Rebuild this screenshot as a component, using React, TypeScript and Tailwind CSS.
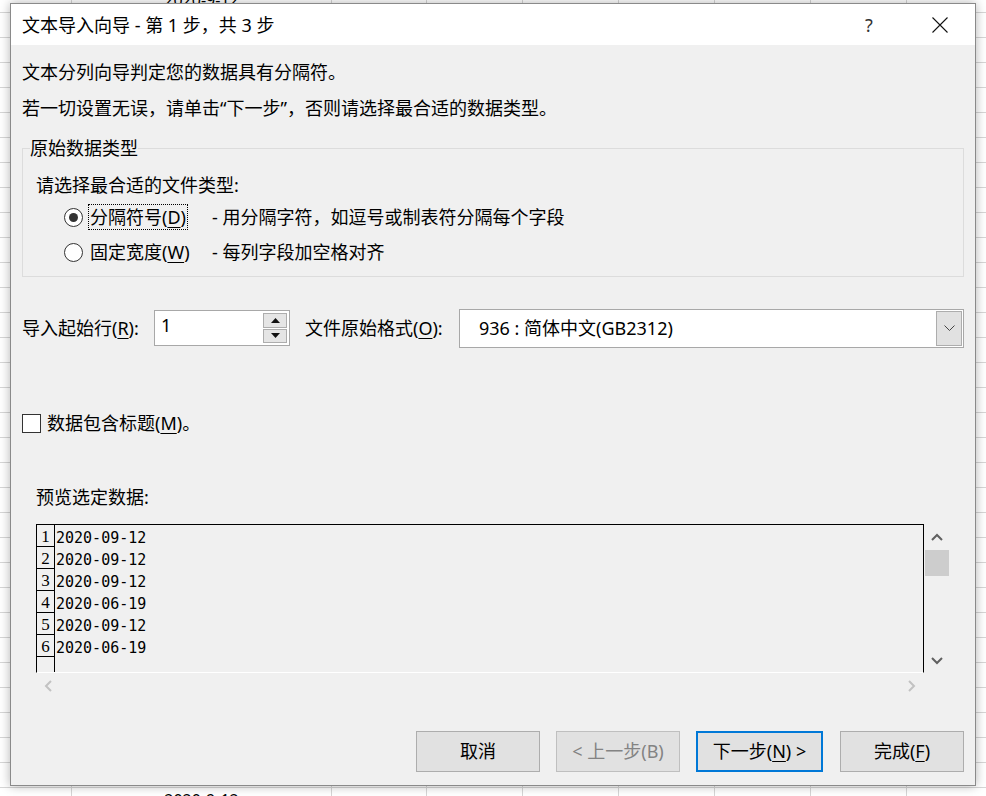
import React from "react";

const colClasses = [
  "w-[72px]",
  "w-[260px]",
  "w-[95px]",
  "w-[96px]",
  "w-[96px]",
  "w-[96px]",
  "w-[96px]",
  "w-[96px]",
  "w-[96px]",
];

const previewRows = [
  "2020-09-12",
  "2020-09-12",
  "2020-09-12",
  "2020-06-19",
  "2020-09-12",
  "2020-06-19",
  "",
];

function Sheet() {
  const rows = Array.from({ length: 34 }, (_, i) => i);
  return (
    <div className="absolute inset-0 overflow-hidden bg-white">
      <div className="mt-[-12px] flex flex-col">
        {rows.map((r) => (
          <div key={r} className="flex h-[25px] shrink-0 border-b border-[#d6d6d6]">
            {colClasses.map((w, c) => (
              <div
                key={c}
                className={`${w} flex shrink-0 items-center justify-center border-r border-[#d6d6d6] text-[16px] text-black`}
              >
                {c === 1 && (r === 0 || r === 32) ? "2020-9-12" : ""}
              </div>
            ))}
          </div>
        ))}
      </div>
    </div>
  );
}

function U({ children }: { children: React.ReactNode }) {
  return <span className="underline decoration-1 underline-offset-[3px]">{children}</span>;
}

function Radio({ checked }: { checked?: boolean }) {
  return (
    <div className="flex h-[19px] w-[19px] shrink-0 items-center justify-center rounded-full border border-[#333] bg-white">
      {checked && <div className="h-[9px] w-[9px] rounded-full bg-[#333]" />}
    </div>
  );
}

function Chevron({ dir, color }: { dir: "up" | "down" | "left" | "right"; color: string }) {
  const d = {
    up: "M1 7 L6 2 L11 7",
    down: "M1 2 L6 7 L11 2",
    left: "M7 1 L2 6 L7 11",
    right: "M2 1 L7 6 L2 11",
  }[dir];
  const vertical = dir === "up" || dir === "down";
  return (
    <svg width={vertical ? 12 : 9} height={vertical ? 9 : 12} viewBox={vertical ? "0 0 12 9" : "0 0 9 12"}>
      <path d={d} fill="none" stroke={color} strokeWidth="2" />
    </svg>
  );
}

export default function App() {
  return (
    <div className="relative h-[796px] w-[986px] overflow-hidden bg-white font-[family-name:'Noto_Sans','Noto_Sans_CJK_SC',sans-serif]">
      <Sheet />

      <div className="absolute left-[10px] top-[3px] flex h-[783px] w-[966px] flex-col border border-[#8a8a8a] bg-[#f0f0f0] text-[18px] text-black shadow-[0_0_10px_rgba(0,0,0,0.3)]">
        {/* title bar */}
        <div className="flex h-[41px] shrink-0 items-center bg-white pl-[11px]">
          <span className="leading-[24px]">文本导入向导 - 第 1 步，共 3 步</span>
          <span className="ml-auto w-[10px] text-center leading-[24px] text-[#333]">?</span>
          <svg className="ml-[58px] mr-[27px]" width="16" height="16" viewBox="0 0 16 16">
            <path d="M0.5 0.5 L15.5 15.5 M15.5 0.5 L0.5 15.5" stroke="#111" strokeWidth="1.1" />
          </svg>
        </div>

        <div className="flex flex-1 flex-col px-[11px]">
          <div className="mt-[15px] h-[24px] leading-[24px]">文本分列向导判定您的数据具有分隔符。</div>
          <div className="mt-[12px] h-[24px] leading-[24px]">
            若一切设置无误，请单击“下一步”，否则请选择最合适的数据类型。
          </div>

          <fieldset className="mt-[16px] border border-[#dcdcdc] pb-[9px]">
            <legend className="ml-[7px] h-[24px] leading-[24px]">原始数据类型</legend>
            <div className="mt-[13px] h-[24px] pl-[13px] leading-[24px]">请选择最合适的文件类型:</div>
            <div className="mt-[5px] flex h-[30px] items-center pl-[41px]">
              <Radio checked />
              <div className="ml-[5px] w-[124px]">
                <span className="inline-flex h-[26px] items-center border border-dotted border-black px-[1px] leading-[24px]">
                  分隔符号(<U>D</U>)
                </span>
              </div>
              <span className="leading-[24px]">- 用分隔字符，如逗号或制表符分隔每个字段</span>
            </div>
            <div className="mt-[5px] flex h-[30px] items-center pl-[41px]">
              <Radio />
              <div className="ml-[5px] w-[124px] pl-[2px] leading-[24px]">
                固定宽度(<U>W</U>)
              </div>
              <span className="leading-[24px]">- 每列字段加空格对齐</span>
            </div>
          </fieldset>

          <div className="mt-[31px] flex h-[40px] items-center">
            <div className="w-[132px] leading-[24px]">
              导入起始行(<U>R</U>):
            </div>
            <div className="flex h-[36px] w-[136px] items-stretch border border-[#a8a8a8] bg-white">
              <div className="flex-1 pl-[6px] pt-[1px] leading-[26px]">1</div>
              <div className="my-[2px] mr-[2px] flex w-[24px] flex-col gap-[1px]">
                <div className="flex flex-1 items-center justify-center border border-[#adadad] bg-[#e5e5e5]">
                  <svg width="9" height="5" viewBox="0 0 9 5">
                    <path d="M0 5 L4.5 0 L9 5 Z" fill="#111" />
                  </svg>
                </div>
                <div className="flex flex-1 items-center justify-center border border-[#adadad] bg-[#e5e5e5]">
                  <svg width="9" height="5" viewBox="0 0 9 5">
                    <path d="M0 0 L4.5 5 L9 0 Z" fill="#111" />
                  </svg>
                </div>
              </div>
            </div>
            <div className="ml-[15px] w-[154px] leading-[24px]">
              文件原始格式(<U>O</U>):
            </div>
            <div className="flex h-[39px] w-[505px] items-center border border-[#a8a8a8] bg-white">
              <span className="flex-1 pl-[19px] leading-[24px]">936 : 简体中文(GB2312)</span>
              <div className="mr-[1px] flex h-[35px] w-[26px] items-center justify-center border border-[#adadad] bg-[#e1e1e1]">
                <svg width="11" height="6" viewBox="0 0 11 6">
                  <path d="M0.5 0.5 L5.5 5.5 L10.5 0.5" fill="none" stroke="#444" strokeWidth="1" />
                </svg>
              </div>
            </div>
          </div>

          <div className="mt-[63px] flex h-[24px] items-center">
            <div className="h-[19px] w-[19px] border border-[#333] bg-white" />
            <span className="ml-[6px] leading-[24px]">
              数据包含标题(<U>M</U>)。
            </span>
          </div>

          <div className="mt-[50px] h-[24px] pl-[14px] leading-[24px]">预览选定数据:</div>

          <div className="ml-[14px] mt-[15px] flex flex-col">
            <div className="flex">
              <div className="h-[149px] w-[888px] overflow-hidden border-b border-l border-r border-t border-black border-b-white">
                {previewRows.map((t, i) => (
                  <div key={i} className="flex h-[22px]">
                    <div className="flex w-[18px] shrink-0 items-end justify-center border-b border-r border-black pb-[1px] font-[family-name:'Liberation_Serif',serif] text-[17px] leading-none">
                      {t ? i + 1 : ""}
                    </div>
                    <div className="pl-[1px] pt-[2px] font-[family-name:'DejaVu_Sans_Mono',monospace] text-[15px] leading-[22px]">
                      {t}
                    </div>
                  </div>
                ))}
              </div>
              <div className="flex h-[149px] w-[26px] flex-col items-center">
                <div className="flex h-[26px] items-center">
                  <Chevron dir="up" color="#606060" />
                </div>
                <div className="h-[26px] w-[24px] bg-[#cdcdcd]" />
                <div className="mt-auto flex h-[26px] items-center">
                  <Chevron dir="down" color="#606060" />
                </div>
              </div>
            </div>
            <div className="flex h-[26px] w-[888px] items-center justify-between px-[8px]">
              <Chevron dir="left" color="#c2c2c2" />
              <Chevron dir="right" color="#c2c2c2" />
            </div>
          </div>

          <div className="mt-[32px] flex justify-end">
            <div className="flex h-[41px] w-[124px] items-center justify-center border border-[#adadad] bg-[#e1e1e1]">
              取消
            </div>
            <div className="ml-[16px] flex h-[41px] w-[124px] items-center justify-center border border-[#bfbfbf] bg-[#e1e1e1] text-[#838383]">
              &lt; 上一步(B)
            </div>
            <div className="ml-[16px] flex h-[41px] w-[127px] items-center justify-center border-2 border-[#0078d7] bg-[#e1e1e1]">
              下一步(<U>N</U>) &gt;
            </div>
            <div className="ml-[17px] flex h-[41px] w-[124px] items-center justify-center border border-[#adadad] bg-[#e1e1e1]">
              完成(<U>F</U>)
            </div>
          </div>
        </div>
      </div>
    </div>
  );
}
